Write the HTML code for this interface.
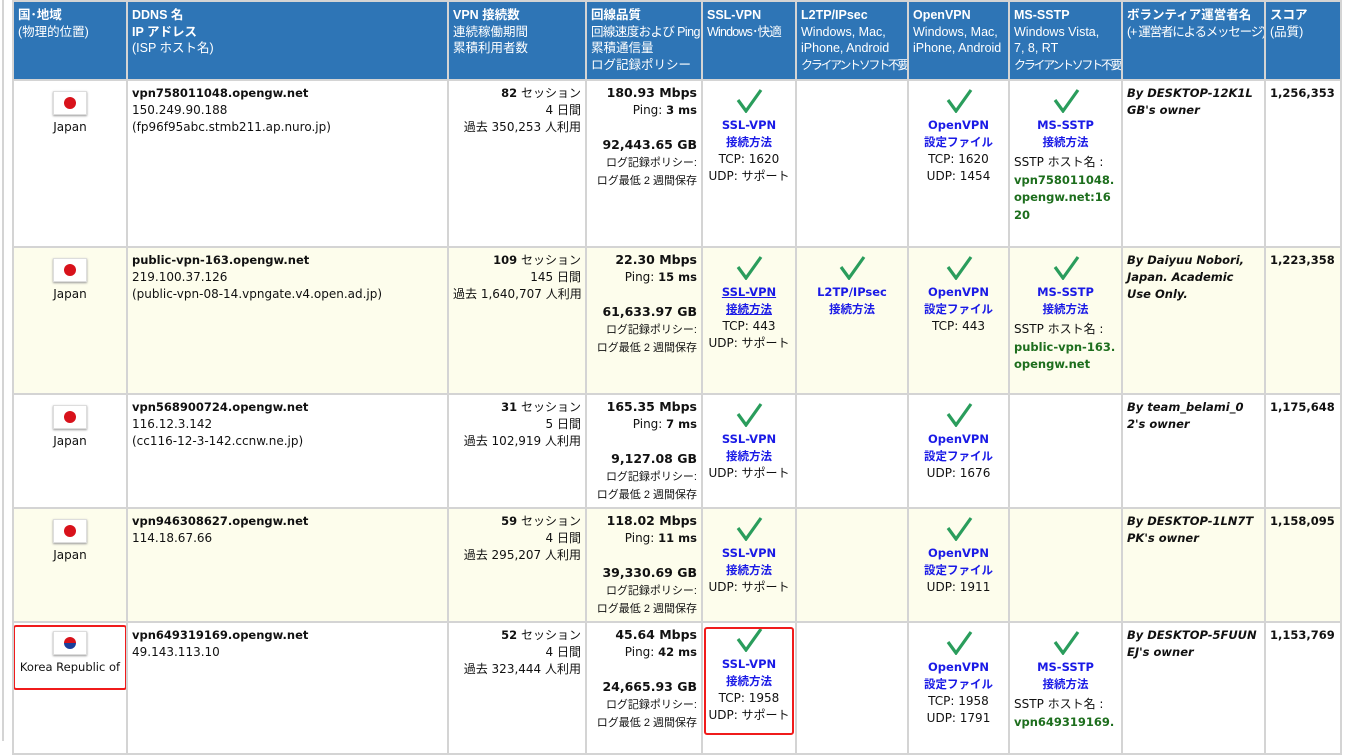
<!DOCTYPE html>
<html><head><meta charset="utf-8"><style>
body{margin:0;background:#fff;width:1357px;height:741px;overflow:hidden;position:relative;font-family:"DejaVu Sans","Noto Sans CJK JP",sans-serif;font-size:12px;color:#111;}
.vl{position:absolute;left:2px;top:0;width:2px;height:741px;background:#d4d4d4}
table{position:absolute;left:12px;top:0;width:1330px;border-collapse:separate;border-spacing:2px;background:#d4d4d4;table-layout:fixed;}
td,th{vertical-align:top;padding:4px 4px 3px;line-height:17px;overflow:hidden;box-sizing:border-box}
td.q{padding-top:3px}
th{background:#2e75b6;color:#fff;text-align:left;font-weight:normal;font-family:"Liberation Sans","Noto Sans CJK JP",sans-serif;font-size:12.5px;line-height:16.5px;padding:5px 4px 4px;white-space:nowrap}
th b{font-weight:bold}
.k{letter-spacing:-2.3px;font-size:12px}
td b{font-size:11.5px}
tr.w td{background:#fff}tr.y td{background:#fdfdec}
.c{text-align:center}.r{text-align:right}
a{color:#1a1ae6;font-weight:bold;text-decoration:none;font-size:11.5px}
.u a{text-decoration:underline}
.g{color:#1d6e1d;font-weight:bold;font-size:11.5px}
.chk{display:block;margin:4px auto 4px;width:30px;height:24px}
.flag{display:block;margin:6px auto 4px;width:32px;height:22px;border:1px solid #ddd;box-shadow:0 1px 2px #999;background:#fff;position:relative}
.flag i{position:absolute;left:10px;top:5px;width:12px;height:12px;border-radius:50%;background:#d8121b}
.red{outline:2px solid #f01b1b;outline-offset:-1px;border-radius:2px}
td b.big{font-size:12.5px}
.sm{font-size:11px;font-family:"Liberation Sans","Noto Sans CJK JP",sans-serif}
.nw{white-space:nowrap}
</style></head><body>
<div class="vl"></div>
<table>
<colgroup><col style="width:112px"><col style="width:319px"><col style="width:136px"><col style="width:114px"><col style="width:92px"><col style="width:110px"><col style="width:99px"><col style="width:111px"><col style="width:141px"><col style="width:74px"></colgroup>
<tr style="height:77px"><th><b>国･地域</b><br>(物理的位置)</th><th><b>DDNS 名<br>IP アドレス</b><br>(ISP ホスト名)</th><th><b>VPN 接続数</b><br>連続稼働期間<br>累積利用者数</th><th><b>回線品質</b><br><span style="letter-spacing:-0.6px">回線速度および Ping</span><br>累積通信量<br>ログ記録ポリシー</th><th><b>SSL-VPN</b><br><span style="letter-spacing:-0.8px">Windows･快適</span></th><th><b>L2TP/IPsec</b><br>Windows, Mac,<br>iPhone, Android<br><span class="k">クライアントソフト不要</span></th><th><b>OpenVPN</b><br>Windows, Mac,<br>iPhone, Android</th><th><b>MS-SSTP</b><br>Windows Vista,<br>7, 8, RT<br><span class="k">クライアントソフト不要</span></th><th><b>ボランティア運営者名</b><br><span style="letter-spacing:-1.2px">(+ 運営者によるメッセージ)</span></th><th><b>スコア</b><br>(品質)</th></tr>

<tr class="w" style="height:165px"><td class="c"><span class="flag"><i></i></span>Japan</td><td><b>vpn758011048.opengw.net</b><br>150.249.90.188<br>(fp96f95abc.stmb211.ap.nuro.jp)</td><td class="r nw"><b>82</b> セッション<br>4 日間<br>過去 350,253 人利用</td><td class="r nw q"><b class="big">180.93 Mbps</b><br>Ping: <b>3 ms</b><br><br><b class="big">92,443.65 GB</b><br><span class="sm">ログ記録ポリシー:<br>ログ最低 2 週間保存</span></td>
<td class="c"><svg class="chk" viewBox="0 0 30 24"><path d="M4 11 L12 22 L27 1" fill="none" stroke="#2a9d5c" stroke-width="3.2"/></svg><a>SSL-VPN<br>接続方法</a><br>TCP: 1620<br>UDP: サポート</td><td></td>
<td class="c"><svg class="chk" viewBox="0 0 30 24"><path d="M4 11 L12 22 L27 1" fill="none" stroke="#2a9d5c" stroke-width="3.2"/></svg><a>OpenVPN<br>設定ファイル</a><br>TCP: 1620<br>UDP: 1454</td>
<td class="c"><svg class="chk" viewBox="0 0 30 24"><path d="M4 11 L12 22 L27 1" fill="none" stroke="#2a9d5c" stroke-width="3.2"/></svg><a>MS-SSTP<br>接続方法</a><div style="text-align:left;line-height:17.5px;margin-top:3px">SSTP ホスト名 :<br><span class="g">vpn758011048.<br>opengw.net:16<br>20</span></div></td>
<td><b><i>By DESKTOP-12K1L GB's owner</i></b></td><td><b>1,256,353</b></td></tr>

<tr class="y" style="height:145px"><td class="c"><span class="flag"><i></i></span>Japan</td><td><b>public-vpn-163.opengw.net</b><br>219.100.37.126<br>(public-vpn-08-14.vpngate.v4.open.ad.jp)</td><td class="r nw"><b>109</b> セッション<br>145 日間<br>過去 1,640,707 人利用</td><td class="r nw q"><b class="big">22.30 Mbps</b><br>Ping: <b>15 ms</b><br><br><b class="big">61,633.97 GB</b><br><span class="sm">ログ記録ポリシー:<br>ログ最低 2 週間保存</span></td>
<td class="c u"><svg class="chk" viewBox="0 0 30 24"><path d="M4 11 L12 22 L27 1" fill="none" stroke="#2a9d5c" stroke-width="3.2"/></svg><a>SSL-VPN<br>接続方法</a><br>TCP: 443<br>UDP: サポート</td>
<td class="c"><svg class="chk" viewBox="0 0 30 24"><path d="M4 11 L12 22 L27 1" fill="none" stroke="#2a9d5c" stroke-width="3.2"/></svg><a>L2TP/IPsec<br>接続方法</a></td>
<td class="c"><svg class="chk" viewBox="0 0 30 24"><path d="M4 11 L12 22 L27 1" fill="none" stroke="#2a9d5c" stroke-width="3.2"/></svg><a>OpenVPN<br>設定ファイル</a><br>TCP: 443</td>
<td class="c"><svg class="chk" viewBox="0 0 30 24"><path d="M4 11 L12 22 L27 1" fill="none" stroke="#2a9d5c" stroke-width="3.2"/></svg><a>MS-SSTP<br>接続方法</a><div style="text-align:left;line-height:17.5px;margin-top:3px">SSTP ホスト名 :<br><span class="g">public-vpn-163.<br>opengw.net</span></div></td>
<td><b><i>By Daiyuu Nobori, Japan. Academic Use Only.</i></b></td><td><b>1,223,358</b></td></tr>

<tr class="w" style="height:110px"><td class="c"><span class="flag"><i></i></span>Japan</td><td><b>vpn568900724.opengw.net</b><br>116.12.3.142<br>(cc116-12-3-142.ccnw.ne.jp)</td><td class="r nw"><b>31</b> セッション<br>5 日間<br>過去 102,919 人利用</td><td class="r nw q"><b class="big">165.35 Mbps</b><br>Ping: <b>7 ms</b><br><br><b class="big">9,127.08 GB</b><br><span class="sm">ログ記録ポリシー:<br>ログ最低 2 週間保存</span></td>
<td class="c"><svg class="chk" viewBox="0 0 30 24"><path d="M4 11 L12 22 L27 1" fill="none" stroke="#2a9d5c" stroke-width="3.2"/></svg><a>SSL-VPN<br>接続方法</a><br>UDP: サポート</td><td></td>
<td class="c"><svg class="chk" viewBox="0 0 30 24"><path d="M4 11 L12 22 L27 1" fill="none" stroke="#2a9d5c" stroke-width="3.2"/></svg><a>OpenVPN<br>設定ファイル</a><br>UDP: 1676</td><td></td>
<td><b><i>By team_belami_0 2's owner</i></b></td><td><b>1,175,648</b></td></tr>

<tr class="y" style="height:110px"><td class="c"><span class="flag"><i></i></span>Japan</td><td><b>vpn946308627.opengw.net</b><br>114.18.67.66</td><td class="r nw"><b>59</b> セッション<br>4 日間<br>過去 295,207 人利用</td><td class="r nw q"><b class="big">118.02 Mbps</b><br>Ping: <b>11 ms</b><br><br><b class="big">39,330.69 GB</b><br><span class="sm">ログ記録ポリシー:<br>ログ最低 2 週間保存</span></td>
<td class="c"><svg class="chk" viewBox="0 0 30 24"><path d="M4 11 L12 22 L27 1" fill="none" stroke="#2a9d5c" stroke-width="3.2"/></svg><a>SSL-VPN<br>接続方法</a><br>UDP: サポート</td><td></td>
<td class="c"><svg class="chk" viewBox="0 0 30 24"><path d="M4 11 L12 22 L27 1" fill="none" stroke="#2a9d5c" stroke-width="3.2"/></svg><a>OpenVPN<br>設定ファイル</a><br>UDP: 1911</td><td></td>
<td><b><i>By DESKTOP-1LN7T PK's owner</i></b></td><td><b>1,158,095</b></td></tr>

<tr class="w" style="height:130px"><td class="c" style="padding:0"><div class="red" style="height:62px;padding-top:1px;margin:3px 0 0 0;font-size:11.5px;white-space:nowrap"><span class="flag" style="margin-top:4px"><i style="background:linear-gradient(#d8121b 50%,#1a3e9a 50%)"></i></span>Korea Republic of</div></td><td><b>vpn649319169.opengw.net</b><br>49.143.113.10</td><td class="r nw"><b>52</b> セッション<br>4 日間<br>過去 323,444 人利用</td><td class="r nw q"><b class="big">45.64 Mbps</b><br>Ping: <b>42 ms</b><br><br><b class="big">24,665.93 GB</b><br><span class="sm">ログ記録ポリシー:<br>ログ最低 2 週間保存</span></td>
<td class="c" style="padding:0"><div class="red" style="height:106px;padding:0 2px;margin:5px 2px 0 2px"><svg class="chk" viewBox="0 0 30 24" style="margin-top:3px"><path d="M4 11 L12 22 L27 1" fill="none" stroke="#2a9d5c" stroke-width="3.2"/></svg><a style="line-height:17px">SSL-VPN<br>接続方法</a><br>TCP: 1958<br>UDP: サポート</div></td><td></td>
<td class="c"><svg class="chk" viewBox="0 0 30 24"><path d="M4 11 L12 22 L27 1" fill="none" stroke="#2a9d5c" stroke-width="3.2"/></svg><a>OpenVPN<br>設定ファイル</a><br>TCP: 1958<br>UDP: 1791</td>
<td class="c"><svg class="chk" viewBox="0 0 30 24"><path d="M4 11 L12 22 L27 1" fill="none" stroke="#2a9d5c" stroke-width="3.2"/></svg><a>MS-SSTP<br>接続方法</a><div style="text-align:left;line-height:17.5px;margin-top:3px">SSTP ホスト名 :<br><span class="g">vpn649319169.</span></div></td>
<td><b><i>By DESKTOP-5FUUN EJ's owner</i></b></td><td><b>1,153,769</b></td></tr>
</table>
</body></html>
